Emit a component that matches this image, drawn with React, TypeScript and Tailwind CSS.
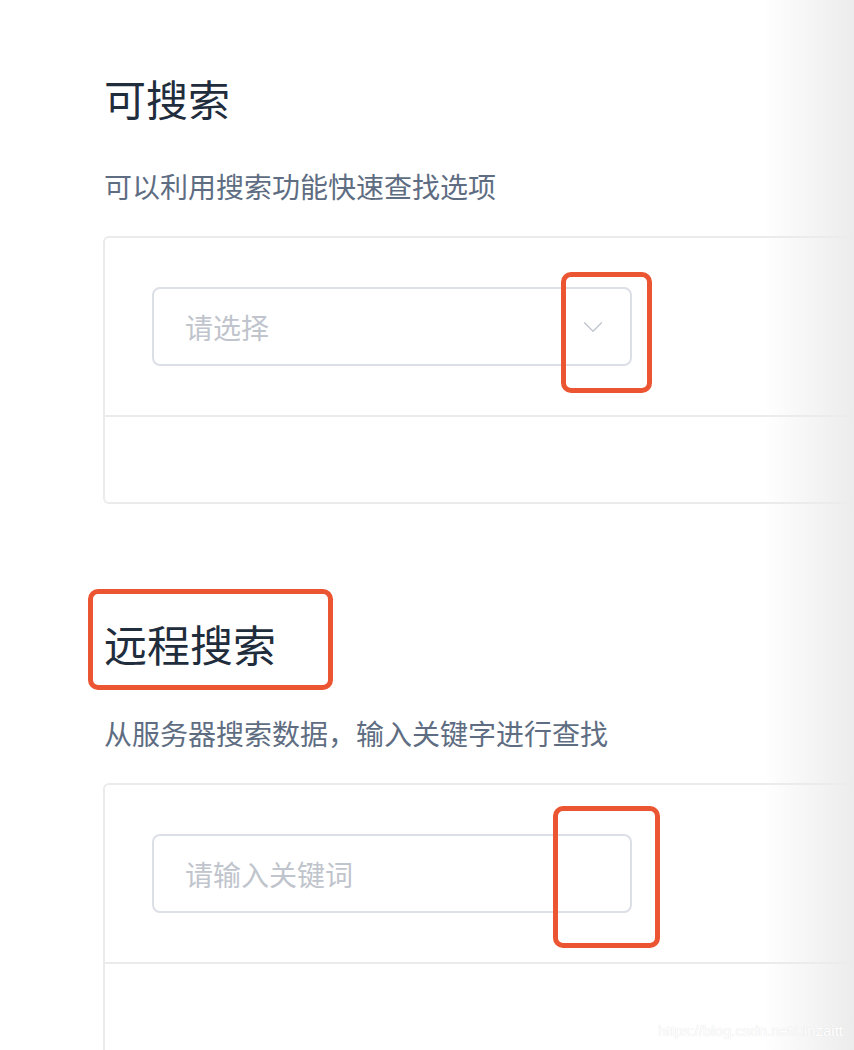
import { ChevronDown } from 'lucide-react';

function DemoBlock({ placeholder, arrow, open }: { placeholder: string; arrow?: boolean; open?: boolean }) {
  return (
    <div className={`w-[820px] rounded-[6px] border-2 border-[#ebebeb] ${open ? 'border-b-0 rounded-b-none' : ''}`}>
      <div className="px-[47px] pt-[49px] pb-[49px]">
        <div className="flex h-[79px] w-[480px] items-center justify-between rounded-[8px] border-2 border-[#dcdfe6] pl-[31px] pr-[20px]">
          <span className="text-[28px] leading-[28px] text-[#c0c4cc]">{placeholder}</span>
          {arrow && <ChevronDown size={34} strokeWidth={0.9} className="text-[#c0c4cc]" />}
        </div>
      </div>
      <div className={`border-t-2 border-[#ebebeb] ${open ? 'h-[100px]' : 'h-[87px]'}`} />
    </div>
  );
}

function Mark({ className }: { className: string }) {
  return <div className={`pointer-events-none absolute rounded-[10px] border-[5px] border-[#eb5531] ${className}`} />;
}

export default function App() {
  return (
    <div
      className="relative h-[1050px] w-[854px] overflow-hidden bg-white"
      style={{ fontFamily: '"Noto Sans CJK SC", "Noto Sans", sans-serif' }}
    >
      <div className="pl-[103px] pt-[77px]">
        <h3 className="pl-px text-[42px] font-normal leading-[42px] text-[#1f2d3d]">可搜索</h3>
        <p className="mt-[53px] pl-px text-[28px] leading-[28px] text-[#5e6d82]">可以利用搜索功能快速查找选项</p>
        <div className="mt-[36px]">
          <DemoBlock placeholder="请选择" arrow />
        </div>

        <h3 className="mt-[118px] pl-px text-[43px] font-normal leading-[42px] text-[#1f2d3d]">远程搜索</h3>
        <p className="mt-[55px] pl-px text-[28px] leading-[28px] text-[#5e6d82]">从服务器搜索数据，输入关键字进行查找</p>
        <div className="mt-[36px]">
          <DemoBlock placeholder="请输入关键词" open />
        </div>
      </div>

      <Mark className="left-[561px] top-[272px] h-[121px] w-[91px]" />
      <Mark className="left-[88px] top-[589px] h-[101px] w-[245px]" />
      <Mark className="left-[553px] top-[806px] h-[142px] w-[107px]" />

      <div className="pointer-events-none absolute inset-y-0 right-0 w-[90px] bg-linear-to-r from-white/0 to-[#ececec]" />

      <div
        className="pointer-events-none absolute bottom-[8px] right-[11px] text-[15px] text-white"
        style={{ fontFamily: '"Liberation Sans", Arial, sans-serif', textShadow: '0 0 1px #d6d6d6' }}
      >
        https://blog.csdn.net/xinzaitt
      </div>
    </div>
  );
}
